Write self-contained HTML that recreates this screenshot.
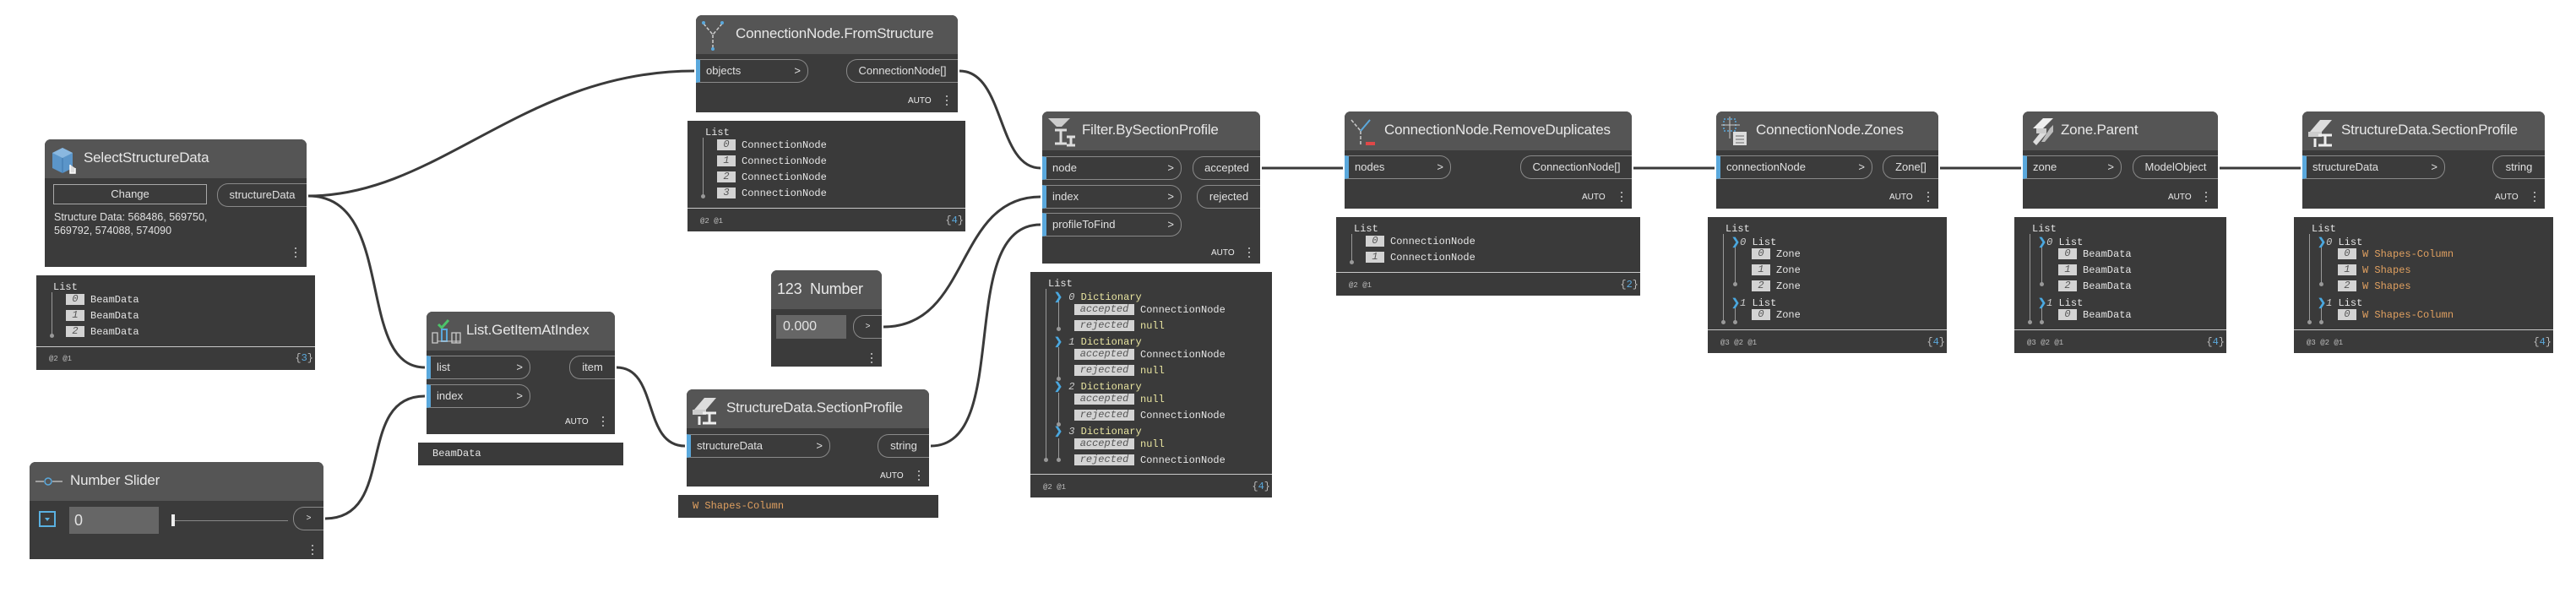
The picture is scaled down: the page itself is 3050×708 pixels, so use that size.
<!DOCTYPE html>
<html><head><meta charset="utf-8"><style>
*{box-sizing:border-box;margin:0;padding:0}
body{width:3050px;height:708px;background:#fff;position:relative;overflow:hidden;font-family:"Liberation Sans",sans-serif;color:#e2e2e2}
.n{position:absolute;background:#3b3b3b;border-radius:7px 7px 0 0}
.h{position:absolute;left:0;top:0;right:0;height:46px;background:#555;border-radius:7px 7px 0 0}
.t{position:absolute;top:12px;font-size:17px;color:#e8e8e8;white-space:nowrap;letter-spacing:-0.2px}
.pi{position:absolute;left:0;height:28px;border:1px solid #8a8a8a;border-left:5px solid #5aa8dc;border-radius:0 13px 13px 0;font-size:13px;line-height:26px;padding-left:7px;color:#e0e0e0}
.pi:after{content:">";position:absolute;right:8px;top:0}
.po{position:absolute;height:28px;border:1px solid #8a8a8a;border-right:none;border-radius:13px 0 0 13px;font-size:13px;line-height:26px;text-align:center;color:#e0e0e0}
.au{position:absolute;font-size:10px;color:#eee}
.d{position:absolute;width:2px;height:2px;background:#aaa;box-shadow:0 5px #aaa,0 10px #aaa}
.w{position:absolute;background:#3a3a3a;font-family:"Liberation Mono",monospace;font-size:12px;color:#e6e6e6}
.sep{position:absolute;left:0;right:0;height:1px;background:#c8c8c8}
.ft{position:absolute;left:15px;font-size:9px;color:#bbb}
.cnt{position:absolute;right:2px;font-size:12px;color:#bbb}
.cnt b{color:#5aa8dc;font-weight:normal}
.r{position:absolute;white-space:nowrap;line-height:16px}
.bx{display:inline-block;background:#d3d3d3;color:#555;font-style:italic;width:22px;height:13px;line-height:13px;text-align:center;margin-right:7px;vertical-align:1px}
.bk{display:inline-block;background:#d3d3d3;color:#555;font-style:italic;width:71px;height:13px;line-height:13px;text-align:center;margin-right:7px;vertical-align:1px}
.vl{position:absolute;width:1px;background:#999}
.vl:after{content:"";position:absolute;left:-2px;bottom:-2px;width:5px;height:5px;border-radius:50%;background:#999}
.ch{color:#4aa8e0;font-weight:bold;font-family:"Liberation Sans",sans-serif}
.y{color:#e8e4a0}.o{color:#e0a060}
.it{font-style:italic;color:#ccc}
</style></head><body>
<svg width="3050" height="708" style="position:absolute;left:0;top:0" fill="none" stroke="#3a3a3a" stroke-width="3">
<path d="M365 232 C520 232,620 84,822 84"/>
<path d="M365 232 C470 232,420 435,503 435"/>
<path d="M385 614 C470 614,420 469,503 469"/>
<path d="M730 435 C780 435,760 528,811 528"/>
<path d="M1136 84 C1190 84,1180 199,1232 199"/>
<path d="M1046 387 C1150 387,1130 233,1232 233"/>
<path d="M1102 528 C1200 528,1130 266,1232 266"/>
<path d="M1494 199 L1590 199"/>
<path d="M1934 199 L2030 199"/>
<path d="M2297 199 L2393 199"/>
<path d="M2628 199 L2724 199"/>
</svg>

<!-- SelectStructureData -->
<div class="n" style="left:53px;top:165px;width:310px;height:151px">
<div class="h"></div>
<svg style="position:absolute;left:7px;top:6px" width="32" height="36"><path d="M2 10 L14 4 L26 10 L26 28 L14 34 L2 28Z" fill="#5b95c9"/><path d="M2 10 L14 16 L26 10 L14 4Z" fill="#8ab8e0"/><path d="M14 16 L14 34" stroke="#3f78ad"/><path d="M23 24 v10 h6 v-6" stroke="#fff" stroke-width="1.5" fill="#ddd"/></svg>
<div class="t" style="left:46px">SelectStructureData</div>
<div style="position:absolute;left:10px;top:53px;width:182px;height:24px;border:1px solid #a8a8a8;font-size:13px;line-height:22px;text-align:center">Change</div>
<div class="po" style="left:204px;top:52px;width:106px">structureData</div>
<div style="position:absolute;left:11px;top:84px;font-size:12.5px;line-height:16px">Structure Data: 568486, 569750,<br>569792, 574088, 574090</div>
<div class="d" style="left:296px;top:128px"></div>
</div>
<div class="w" style="left:43px;top:326px;width:330px;height:112px">
<div class="r" style="left:20px;top:6px">List</div>
<div class="vl" style="left:18px;top:20px;height:52px"></div>
<div class="r" style="left:35px;top:21px"><span class="bx">0</span>BeamData</div>
<div class="r" style="left:35px;top:40px"><span class="bx">1</span>BeamData</div>
<div class="r" style="left:35px;top:59px"><span class="bx">2</span>BeamData</div>
<div class="sep" style="top:84px"></div>
<div class="ft" style="top:94px">@2 @1</div><div class="cnt" style="top:91px">{<b>3</b>}</div>
</div>

<!-- List.GetItemAtIndex -->
<div class="n" style="left:505px;top:369px;width:223px;height:145px">
<div class="h"></div>
<svg style="position:absolute;left:6px;top:7px" width="36" height="34" fill="none"><path d="M8 8 l4 4 l8 -9" stroke="#4cc46a" stroke-width="3"/><path d="M1 18 h6 v12 h-6z M24 18 h10 v12 h-10z M29 18 v12" stroke="#ccc" stroke-width="1.3"/><rect x="12" y="14" width="6" height="14" stroke="#5aa8dc" stroke-width="2"/><path d="M7 28 h27" stroke="#ccc"/></svg>
<div class="t" style="left:47px">List.GetItemAtIndex</div>
<div class="pi" style="top:52px;width:123px">list</div>
<div class="pi" style="top:86px;width:123px">index</div>
<div class="po" style="left:169px;top:52px;width:54px">item</div>
<div class="au" style="left:164px;top:125px">AUTO</div>
<div class="d" style="left:208px;top:124px"></div>
</div>
<div class="w" style="left:495px;top:524px;width:243px;height:27px"><div class="r" style="left:17px;top:5px">BeamData</div></div>

<!-- Number Slider -->
<div class="n" style="left:35px;top:547px;width:348px;height:115px">
<div class="h"></div>
<svg style="position:absolute;left:7px;top:16px" width="34" height="14" fill="none"><path d="M0 7 H10 M20 7 H32" stroke="#ccc" stroke-width="1.3"/><circle cx="15" cy="7" r="4" stroke="#5aa8dc" stroke-width="1.5"/></svg>
<div class="t" style="left:48px">Number Slider</div>
<div style="position:absolute;left:11px;top:58px;width:20px;height:19px;border:2px solid #5ab0e0"><div style="position:absolute;left:5px;top:6px;border:3px solid transparent;border-top:4px solid #5ab0e0"></div></div>
<div style="position:absolute;left:47px;top:53px;width:106px;height:32px;background:#666;font-size:18px;line-height:32px;padding-left:6px">0</div>
<div style="position:absolute;left:168px;top:69px;width:138px;height:1px;background:#888"></div>
<div style="position:absolute;left:168px;top:62px;width:4px;height:14px;background:#eee"></div>
<div class="po" style="left:312px;top:53px;width:36px;font-size:10px">&gt;</div>
<div class="d" style="left:334px;top:98px"></div>
</div>

<!-- ConnectionNode.FromStructure -->
<div class="n" style="left:824px;top:18px;width:310px;height:115px">
<div class="h"></div>
<svg style="position:absolute;left:6px;top:6px" width="32" height="36" fill="none"><path d="M3 4 L14 17 L25 4 M14 17 V34" stroke="#ccc" stroke-width="1.5" stroke-dasharray="4 2"/><circle cx="3" cy="3" r="2" fill="#5aa8dc"/><circle cx="25" cy="3" r="2" fill="#5aa8dc"/><circle cx="14" cy="34" r="2" fill="#5aa8dc"/></svg>
<div class="t" style="left:47px">ConnectionNode.FromStructure</div>
<div class="pi" style="top:52px;width:133px">objects</div>
<div class="po" style="left:178px;top:52px;width:132px">ConnectionNode[]</div>
<div class="au" style="left:251px;top:96px">AUTO</div>
<div class="d" style="left:296px;top:95px"></div>
</div>
<div class="w" style="left:814px;top:143px;width:329px;height:131px">
<div class="r" style="left:21px;top:6px">List</div>
<div class="vl" style="left:18px;top:20px;height:70px"></div>
<div class="r" style="left:35px;top:21px"><span class="bx">0</span>ConnectionNode</div>
<div class="r" style="left:35px;top:40px"><span class="bx">1</span>ConnectionNode</div>
<div class="r" style="left:35px;top:59px"><span class="bx">2</span>ConnectionNode</div>
<div class="r" style="left:35px;top:78px"><span class="bx">3</span>ConnectionNode</div>
<div class="sep" style="top:103px"></div>
<div class="ft" style="top:114px">@2 @1</div><div class="cnt" style="top:111px">{<b>4</b>}</div>
</div>

<!-- Number -->
<div class="n" style="left:913px;top:320px;width:131px;height:114px">
<div class="h"></div>
<div class="t" style="left:7px;top:12px;font-size:18px">123&nbsp; Number</div>
<div style="position:absolute;left:6px;top:53px;width:83px;height:28px;background:#666;font-size:16px;line-height:28px;padding-left:8px">0.000</div>
<div class="po" style="left:97px;top:53px;width:34px;font-size:10px">&gt;</div>
<div class="d" style="left:118px;top:98px"></div>
</div>

<!-- StructureData.SectionProfile mid -->
<div class="n" style="left:813px;top:461px;width:287px;height:115px">
<div class="h"></div>
<svg style="position:absolute;left:5px;top:6px" width="36" height="36" fill="none"><path d="M4 18 L16 4 L30 4 L18 18Z" fill="#ddd"/><rect x="2" y="18" width="16" height="6" fill="#ccc"/><path d="M14 22 h16 M22 22 v12 M14 34 h16 M10 26 v10" stroke="#eee" stroke-width="3"/></svg>
<div class="t" style="left:47px">StructureData.SectionProfile</div>
<div class="pi" style="top:53px;width:170px">structureData</div>
<div class="po" style="left:226px;top:53px;width:61px">string</div>
<div class="au" style="left:229px;top:97px">AUTO</div>
<div class="d" style="left:274px;top:96px"></div>
</div>
<div class="w" style="left:803px;top:586px;width:308px;height:27px"><div class="r o" style="left:17px;top:5px">W Shapes-Column</div></div>

<!-- Filter.BySectionProfile -->
<div class="n" style="left:1234px;top:132px;width:258px;height:180px">
<div class="h"></div>
<svg style="position:absolute;left:5px;top:6px" width="36" height="36" fill="none"><path d="M2 2 H28 L18 12 H12Z" fill="#ccc"/><path d="M10 16 h14 M17 16 v16 M10 32 h14 M24 24 h10 M29 24 v10 M24 34 h10" stroke="#ddd" stroke-width="3"/></svg>
<div class="t" style="left:47px">Filter.BySectionProfile</div>
<div class="pi" style="top:53px;width:165px">node</div>
<div class="pi" style="top:87px;width:165px">index</div>
<div class="pi" style="top:120px;width:165px">profileToFind</div>
<div class="po" style="left:178px;top:53px;width:80px">accepted</div>
<div class="po" style="left:183px;top:87px;width:75px">rejected</div>
<div class="au" style="left:200px;top:162px">AUTO</div>
<div class="d" style="left:244px;top:161px"></div>
</div>
<div class="w" style="left:1220px;top:322px;width:286px;height:267px">
<div class="r" style="left:21px;top:6px">List</div>
<div class="vl" style="left:18px;top:20px;height:203px"></div>
<div class="vl" style="left:33px;top:30px;height:38px"></div>
<div class="vl" style="left:33px;top:89px;height:38px"></div>
<div class="vl" style="left:33px;top:143px;height:38px"></div>
<div class="vl" style="left:33px;top:197px;height:26px"></div>
<div class="r" style="left:28px;top:21px"><span class="ch">&#x276F;</span> <span class="it">0</span> <span class="y">Dictionary</span></div>
<div class="r" style="left:52px;top:37px"><span class="bk">accepted</span>ConnectionNode</div>
<div class="r" style="left:52px;top:56px"><span class="bk">rejected</span><span class="y">null</span></div>
<div class="r" style="left:28px;top:74px"><span class="ch">&#x276F;</span> <span class="it">1</span> <span class="y">Dictionary</span></div>
<div class="r" style="left:52px;top:90px"><span class="bk">accepted</span>ConnectionNode</div>
<div class="r" style="left:52px;top:109px"><span class="bk">rejected</span><span class="y">null</span></div>
<div class="r" style="left:28px;top:127px"><span class="ch">&#x276F;</span> <span class="it">2</span> <span class="y">Dictionary</span></div>
<div class="r" style="left:52px;top:143px"><span class="bk">accepted</span><span class="y">null</span></div>
<div class="r" style="left:52px;top:162px"><span class="bk">rejected</span>ConnectionNode</div>
<div class="r" style="left:28px;top:180px"><span class="ch">&#x276F;</span> <span class="it">3</span> <span class="y">Dictionary</span></div>
<div class="r" style="left:52px;top:196px"><span class="bk">accepted</span><span class="y">null</span></div>
<div class="r" style="left:52px;top:215px"><span class="bk">rejected</span>ConnectionNode</div>
<div class="sep" style="top:239px"></div>
<div class="ft" style="top:250px">@2 @1</div><div class="cnt" style="top:247px">{<b>4</b>}</div>
</div>

<!-- RemoveDuplicates -->
<div class="n" style="left:1592px;top:132px;width:340px;height:115px">
<div class="h"></div>
<svg style="position:absolute;left:5px;top:6px" width="38" height="36" fill="none"><path d="M3 4 L14 17 L25 4 M14 17 V34" stroke="#ccc" stroke-width="1.5" stroke-dasharray="4 2"/><path d="M14 17 L25 4" stroke="#5aa8dc" stroke-width="2"/><rect x="20" y="30" width="11" height="4" fill="#e04848"/></svg>
<div class="t" style="left:47px">ConnectionNode.RemoveDuplicates</div>
<div class="pi" style="top:52px;width:126px">nodes</div>
<div class="po" style="left:208px;top:52px;width:132px">ConnectionNode[]</div>
<div class="au" style="left:281px;top:96px">AUTO</div>
<div class="d" style="left:327px;top:95px"></div>
</div>
<div class="w" style="left:1582px;top:257px;width:360px;height:93px">
<div class="r" style="left:21px;top:6px">List</div>
<div class="vl" style="left:18px;top:20px;height:34px"></div>
<div class="r" style="left:35px;top:21px"><span class="bx">0</span>ConnectionNode</div>
<div class="r" style="left:35px;top:40px"><span class="bx">1</span>ConnectionNode</div>
<div class="sep" style="top:65px"></div>
<div class="ft" style="top:76px">@2 @1</div><div class="cnt" style="top:73px">{<b>2</b>}</div>
</div>

<!-- Zones -->
<div class="n" style="left:2032px;top:132px;width:263px;height:115px">
<div class="h"></div>
<svg style="position:absolute;left:6px;top:6px" width="36" height="36" fill="none"><rect x="3" y="3" width="14" height="14" stroke="#5aa8dc" stroke-width="1.5" stroke-dasharray="2 2"/><path d="M0 10 H22 M10 0 V26" stroke="#ccc"/><rect x="14" y="18" width="16" height="16" fill="#ddd"/><path d="M17 23 h10 M17 27 h10 M17 31 h10" stroke="#666"/></svg>
<div class="t" style="left:47px">ConnectionNode.Zones</div>
<div class="pi" style="top:52px;width:185px">connectionNode</div>
<div class="po" style="left:197px;top:52px;width:66px">Zone[]</div>
<div class="au" style="left:205px;top:96px">AUTO</div>
<div class="d" style="left:250px;top:95px"></div>
</div>
<div class="w" style="left:2022px;top:257px;width:283px;height:161px">
<div class="r" style="left:21px;top:6px">List</div>
<div class="vl" style="left:18px;top:20px;height:105px"></div>
<div class="vl" style="left:32px;top:34px;height:46px"></div>
<div class="vl" style="left:32px;top:107px;height:18px"></div>
<div class="r" style="left:28px;top:21px"><span class="ch">&#x276F;</span><span class="it">0</span> List</div>
<div class="r" style="left:52px;top:36px"><span class="bx">0</span>Zone</div>
<div class="r" style="left:52px;top:55px"><span class="bx">1</span>Zone</div>
<div class="r" style="left:52px;top:74px"><span class="bx">2</span>Zone</div>
<div class="r" style="left:28px;top:93px"><span class="ch">&#x276F;</span><span class="it">1</span> List</div>
<div class="r" style="left:52px;top:108px"><span class="bx">0</span>Zone</div>
<div class="sep" style="top:133px"></div>
<div class="ft" style="top:144px">@3 @2 @1</div><div class="cnt" style="top:141px">{<b>4</b>}</div>
</div>

<!-- Zone.Parent -->
<div class="n" style="left:2395px;top:132px;width:231px;height:115px">
<div class="h"></div>
<svg style="position:absolute;left:6px;top:6px" width="36" height="36"><path d="M6 14 L18 2 L30 2 L18 14Z" fill="#eee"/><path d="M10 14 h12 v6 h-12z" fill="#ccc"/><path d="M14 20 L6 30 L10 34 L22 20Z" fill="#ddd"/><path d="M26 14 L30 10 L30 18 L20 30 L16 30Z" fill="#bbb"/></svg>
<div class="t" style="left:45px">Zone.Parent</div>
<div class="pi" style="top:52px;width:117px">zone</div>
<div class="po" style="left:130px;top:52px;width:101px">ModelObject</div>
<div class="au" style="left:172px;top:96px">AUTO</div>
<div class="d" style="left:216px;top:95px"></div>
</div>
<div class="w" style="left:2385px;top:257px;width:251px;height:161px">
<div class="r" style="left:21px;top:6px">List</div>
<div class="vl" style="left:18px;top:20px;height:105px"></div>
<div class="vl" style="left:32px;top:34px;height:46px"></div>
<div class="vl" style="left:32px;top:107px;height:18px"></div>
<div class="r" style="left:28px;top:21px"><span class="ch">&#x276F;</span><span class="it">0</span> List</div>
<div class="r" style="left:52px;top:36px"><span class="bx">0</span>BeamData</div>
<div class="r" style="left:52px;top:55px"><span class="bx">1</span>BeamData</div>
<div class="r" style="left:52px;top:74px"><span class="bx">2</span>BeamData</div>
<div class="r" style="left:28px;top:93px"><span class="ch">&#x276F;</span><span class="it">1</span> List</div>
<div class="r" style="left:52px;top:108px"><span class="bx">0</span>BeamData</div>
<div class="sep" style="top:133px"></div>
<div class="ft" style="top:144px">@3 @2 @1</div><div class="cnt" style="top:141px">{<b>4</b>}</div>
</div>

<!-- StructureData.SectionProfile right -->
<div class="n" style="left:2726px;top:132px;width:287px;height:115px">
<div class="h"></div>
<svg style="position:absolute;left:5px;top:6px" width="36" height="36" fill="none"><path d="M4 18 L16 4 L30 4 L18 18Z" fill="#ddd"/><rect x="2" y="18" width="16" height="6" fill="#ccc"/><path d="M14 22 h16 M22 22 v12 M14 34 h16 M10 26 v10" stroke="#eee" stroke-width="3"/></svg>
<div class="t" style="left:46px">StructureData.SectionProfile</div>
<div class="pi" style="top:52px;width:169px">structureData</div>
<div class="po" style="left:225px;top:52px;width:62px">string</div>
<div class="au" style="left:228px;top:96px">AUTO</div>
<div class="d" style="left:274px;top:95px"></div>
</div>
<div class="w" style="left:2716px;top:257px;width:307px;height:161px">
<div class="r" style="left:21px;top:6px">List</div>
<div class="vl" style="left:18px;top:20px;height:105px"></div>
<div class="vl" style="left:32px;top:34px;height:46px"></div>
<div class="vl" style="left:32px;top:107px;height:18px"></div>
<div class="r" style="left:28px;top:21px"><span class="ch">&#x276F;</span><span class="it">0</span> List</div>
<div class="r" style="left:52px;top:36px"><span class="bx">0</span><span class="o">W Shapes-Column</span></div>
<div class="r" style="left:52px;top:55px"><span class="bx">1</span><span class="o">W Shapes</span></div>
<div class="r" style="left:52px;top:74px"><span class="bx">2</span><span class="o">W Shapes</span></div>
<div class="r" style="left:28px;top:93px"><span class="ch">&#x276F;</span><span class="it">1</span> List</div>
<div class="r" style="left:52px;top:108px"><span class="bx">0</span><span class="o">W Shapes-Column</span></div>
<div class="sep" style="top:133px"></div>
<div class="ft" style="top:144px">@3 @2 @1</div><div class="cnt" style="top:141px">{<b>4</b>}</div>
</div>
</body></html>
